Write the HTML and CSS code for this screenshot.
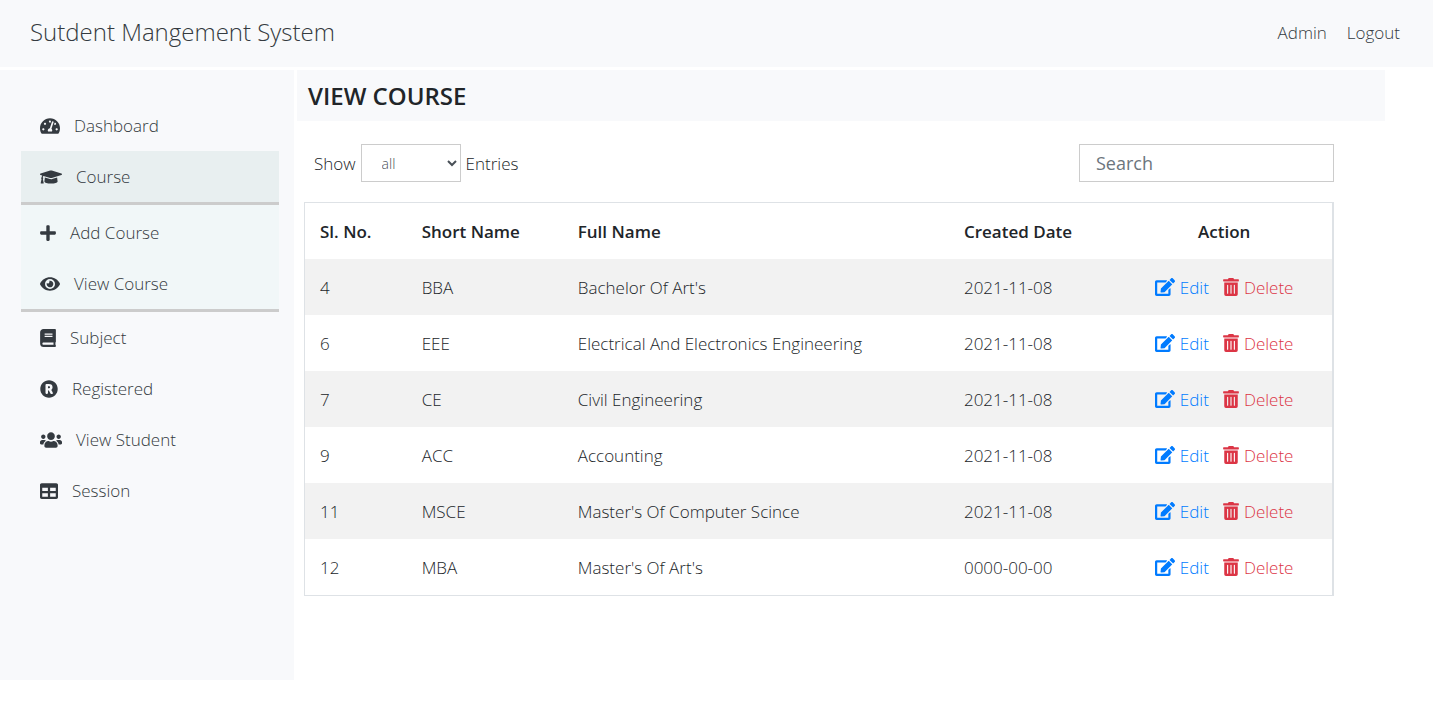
FILE: index.html
```html
<!DOCTYPE html>
<html lang="en">
<head>
<meta charset="utf-8">
<meta name="viewport" content="width=device-width, initial-scale=1">
<title>View Course</title>
<link rel="stylesheet" href="styles.css">
</head>
<body>
<svg class="sprite" aria-hidden="true">
  <symbol id="gauge" viewBox="0 0 576 512"><path d="M288 32C128.94 32 0 160.94 0 320c0 52.8 14.25 102.26 39.06 144.8 5.61 9.62 16.3 15.2 27.44 15.2h443c11.14 0 21.83-5.58 27.44-15.2C561.75 422.26 576 372.8 576 320c0-159.06-128.94-288-288-288zm0 64c14.71 0 26.58 10.13 30.32 23.65-1.11 2.26-2.64 4.23-3.45 6.67l-9.22 27.67c-5.13 3.49-10.97 6.01-17.64 6.01-17.67 0-32-14.33-32-32S270.33 96 288 96zM96 384c-17.67 0-32-14.33-32-32s14.33-32 32-32 32 14.33 32 32-14.33 32-32 32zm48-160c-17.67 0-32-14.33-32-32s14.33-32 32-32 32 14.33 32 32-14.33 32-32 32zm246.77-72.41l-61.33 184C343.13 347.33 352 364.54 352 384c0 11.72-3.38 22.55-8.88 32H232.88c-5.5-9.45-8.88-20.28-8.88-32 0-33.94 26.5-61.43 59.9-63.59l61.34-184.01c4.17-12.56 17.73-19.45 30.36-15.17 12.57 4.19 19.35 17.79 15.17 30.36zm14.66 57.2l15.52-46.55c3.47-1.29 7.13-2.23 11.05-2.23 17.67 0 32 14.33 32 32s-14.33 32-32 32c-11.38-.01-20.89-6.28-26.57-15.22zM480 384c-17.67 0-32-14.33-32-32s14.33-32 32-32 32 14.33 32 32-14.33 32-32 32z"/></symbol>
  <symbol id="cap" viewBox="0 0 640 512"><path d="M622.34 153.2L343.4 67.5c-15.2-4.67-31.6-4.67-46.79 0L17.66 153.2c-23.54 7.23-23.54 38.36 0 45.59l48.63 14.94c-10.67 13.19-17.23 29.28-17.88 46.9C38.78 266.15 32 276.11 32 288c0 10.78 5.68 19.85 13.86 25.65L20.33 428.53C18.11 438.52 25.71 448 35.94 448h56.11c10.24 0 17.84-9.48 15.62-19.47L82.14 313.65C90.32 307.85 96 298.78 96 288c0-11.57-6.47-21.25-15.66-26.87.76-15.02 8.44-28.3 20.69-36.72L296.6 284.5c9.06 2.78 26.44 6.25 46.79 0l278.95-85.7c23.55-7.24 23.55-38.36 0-45.6zM352.79 315.09c-28.53 8.76-52.84 3.92-65.59 0l-145.02-44.55L128 384c0 35.35 85.96 64 192 64s192-28.65 192-64l-14.18-113.47-145.03 44.56z"/></symbol>
  <symbol id="plus" viewBox="0 0 448 512"><path d="M416 208H272V64c0-17.67-14.33-32-32-32h-32c-17.67 0-32 14.33-32 32v144H32c-17.67 0-32 14.33-32 32v32c0 17.67 14.33 32 32 32h144v144c0 17.67 14.33 32 32 32h32c17.67 0 32-14.33 32-32V304h144c17.67 0 32-14.33 32-32v-32c0-17.67-14.33-32-32-32z"/></symbol>
  <symbol id="eye" viewBox="0 0 576 512"><path d="M572.52 241.4C518.29 135.59 410.93 64 288 64S57.68 135.64 3.48 241.41a32.35 32.35 0 0 0 0 29.19C57.71 376.41 165.07 448 288 448s230.32-71.64 284.52-177.41a32.35 32.35 0 0 0 0-29.19zM288 400a144 144 0 1 1 144-144 143.93 143.93 0 0 1-144 144zm0-240a95.31 95.31 0 0 0-25.31 3.79 47.85 47.85 0 0 1-66.9 66.9A95.78 95.78 0 1 0 288 160z"/></symbol>
  <symbol id="book" viewBox="0 0 448 512"><path d="M448 360V24c0-13.3-10.7-24-24-24H96C43 0 0 43 0 96v320c0 53 43 96 96 96h328c13.3 0 24-10.7 24-24v-16c0-7.5-3.5-14.3-8.9-18.7-4.2-15.4-4.2-59.3 0-74.7 5.4-4.3 8.9-11.1 8.9-18.6zM128 134c0-3.3 2.7-6 6-6h212c3.3 0 6 2.7 6 6v20c0 3.3-2.7 6-6 6H134c-3.3 0-6-2.7-6-6v-20zm0 64c0-3.3 2.7-6 6-6h212c3.3 0 6 2.7 6 6v20c0 3.3-2.7 6-6 6H134c-3.3 0-6-2.7-6-6v-20zm253.4 250H96c-17.7 0-32-14.3-32-32 0-17.6 14.4-32 32-32h285.4c-1.9 17.1-1.9 46.9 0 64z"/></symbol>
  <symbol id="registered" viewBox="0 0 512 512"><path d="M285.363 207.475c0 18.6-9.831 28.431-28.431 28.431h-29.876v-56.14h23.378c28.668 0 34.929 7.773 34.929 27.709zM504 256c0 136.967-111.033 248-248 248S8 392.967 8 256 119.033 8 256 8s248 111.033 248 248zM363.411 360.414c-46.729-84.825-43.299-78.636-44.702-80.98 23.432-15.172 37.945-42.979 37.945-74.486 0-54.244-31.5-89.252-105.498-89.252h-70.667c-13.255 0-24 10.745-24 24V372c0 13.255 10.745 24 24 24h22.567c13.255 0 24-10.745 24-24v-71.663h25.556l44.129 82.937a24.001 24.001 0 0 0 21.188 12.727h24.464c18.261-.001 29.829-19.591 21.018-35.587z"/></symbol>
  <symbol id="users" viewBox="0 0 640 512"><path d="M96 224c35.3 0 64-28.7 64-64s-28.7-64-64-64-64 28.7-64 64 28.7 64 64 64zm448 0c35.3 0 64-28.7 64-64s-28.7-64-64-64-64 28.7-64 64 28.7 64 64 64zm32 32h-64c-17.6 0-33.5 7.1-45.1 18.6 40.3 22.1 68.9 62 75.1 109.4h66c17.7 0 32-14.3 32-32v-32c0-35.3-28.7-64-64-64zm-256 0c61.9 0 112-50.1 112-112S381.9 32 320 32 208 82.1 208 144s50.1 112 112 112zm76.8 32h-8.3c-20.8 10-43.9 16-68.5 16s-47.6-6-68.5-16h-8.3C179.6 288 128 339.6 128 403.2V432c0 26.5 21.5 48 48 48h288c26.5 0 48-21.5 48-48v-28.8c0-63.6-51.6-115.2-115.2-115.2zm-223.7-13.4C161.5 263.1 145.6 256 128 256H64c-35.3 0-64 28.7-64 64v32c0 17.7 14.3 32 32 32h65.9c6.3-47.4 34.9-87.3 75.2-109.4z"/></symbol>
  <symbol id="table" viewBox="0 0 512 512"><path d="M464 32H48C21.49 32 0 53.49 0 80v352c0 26.51 21.49 48 48 48h416c26.51 0 48-21.49 48-48V80c0-26.51-21.49-48-48-48zM224 416H64v-96h160v96zm0-160H64v-96h160v96zm224 160H288v-96h160v96zm0-160H288v-96h160v96z"/></symbol>
  <symbol id="edit" viewBox="0 0 576 512"><path d="M402.6 83.2l90.2 90.2c3.8 3.8 3.8 10 0 13.8L274.4 405.6l-92.8 10.3c-12.4 1.4-22.9-9.1-21.5-21.5l10.3-92.8L388.8 83.2c3.8-3.8 10-3.8 13.8 0zm162-22.9l-48.8-48.8c-15.2-15.2-39.9-15.2-55.2 0l-35.4 35.4c-3.8 3.8-3.8 10 0 13.8l90.2 90.2c3.8 3.8 10 3.8 13.8 0l35.4-35.4c15.2-15.3 15.2-40 0-55.2zM384 346.2V448H64V128h229.8c3.2 0 6.2-1.3 8.5-3.5l40-40c7.6-7.6 2.2-20.5-8.5-20.5H48C21.5 64 0 85.5 0 112v352c0 26.5 21.5 48 48 48h352c26.5 0 48-21.5 48-48V306.2c0-10.7-12.9-16-20.5-8.5l-40 40c-2.2 2.3-3.5 5.3-3.5 8.5z"/></symbol>
  <symbol id="trash" viewBox="0 0 448 512"><path d="M32 464a48 48 0 0 0 48 48h288a48 48 0 0 0 48-48V128H32zm272-256a16 16 0 0 1 32 0v224a16 16 0 0 1-32 0zm-96 0a16 16 0 0 1 32 0v224a16 16 0 0 1-32 0zm-96 0a16 16 0 0 1 32 0v224a16 16 0 0 1-32 0zM432 32H312l-9.4-18.7A24 24 0 0 0 281.1 0H166.8a23.72 23.72 0 0 0-21.4 13.3L136 32H16A16 16 0 0 0 0 48v32a16 16 0 0 0 16 16h416a16 16 0 0 0 16-16V48a16 16 0 0 0-16-16z"/></symbol>
</svg>

<header class="topbar">
  <a class="brand" href="#">Sutdent Mangement System</a>
  <nav class="account">
    <a href="#">Admin</a>
    <a href="#">Logout</a>
  </nav>
</header>

<div class="layout">
  <nav class="sidebar">
    <a class="nav-link" href="#"><svg class="icon icon-20"><use href="#gauge"/></svg>Dashboard</a>
    <a class="nav-link nav-link-open" href="#"><svg class="icon icon-22"><use href="#cap"/></svg>Course</a>
    <div class="submenu">
      <a class="nav-link" href="#"><svg class="icon icon-16"><use href="#plus"/></svg>Add Course</a>
      <a class="nav-link" href="#"><svg class="icon icon-20"><use href="#eye"/></svg>View Course</a>
    </div>
    <a class="nav-link" href="#"><svg class="icon icon-16"><use href="#book"/></svg>Subject</a>
    <a class="nav-link" href="#"><svg class="icon icon-18"><use href="#registered"/></svg>Registered</a>
    <a class="nav-link" href="#"><svg class="icon icon-22"><use href="#users"/></svg>View Student</a>
    <a class="nav-link" href="#"><svg class="icon icon-18"><use href="#table"/></svg>Session</a>
  </nav>

  <main class="main">
    <h1 class="page-title">VIEW COURSE</h1>
    <div class="content">
      <div class="toolbar">
        <div class="entries">
          <label for="entries">Show</label>
          <select id="entries" class="entries-select"><option>all</option></select>
          <span>Entries</span>
        </div>
        <input class="search" type="text" placeholder="Search" aria-label="Search">
      </div>
      <table class="courses">
        <colgroup><col class="col-no"><col class="col-short"><col class="col-full"><col class="col-date"><col class="col-action"></colgroup>
        <thead>
          <tr><th>Sl. No.</th><th>Short Name</th><th>Full Name</th><th>Created Date</th><th class="action">Action</th></tr>
        </thead>
        <tbody>
          <tr><td>4</td><td>BBA</td><td>Bachelor Of Art's</td><td>2021-11-08</td><td><div class="actions"><a class="edit" href="#"><svg class="icon icon-20"><use href="#edit"/></svg>Edit</a><a class="delete" href="#"><svg class="icon icon-16"><use href="#trash"/></svg>Delete</a></div></td></tr>
          <tr><td>6</td><td>EEE</td><td>Electrical And Electronics Engineering</td><td>2021-11-08</td><td><div class="actions"><a class="edit" href="#"><svg class="icon icon-20"><use href="#edit"/></svg>Edit</a><a class="delete" href="#"><svg class="icon icon-16"><use href="#trash"/></svg>Delete</a></div></td></tr>
          <tr><td>7</td><td>CE</td><td>Civil Engineering</td><td>2021-11-08</td><td><div class="actions"><a class="edit" href="#"><svg class="icon icon-20"><use href="#edit"/></svg>Edit</a><a class="delete" href="#"><svg class="icon icon-16"><use href="#trash"/></svg>Delete</a></div></td></tr>
          <tr><td>9</td><td>ACC</td><td>Accounting</td><td>2021-11-08</td><td><div class="actions"><a class="edit" href="#"><svg class="icon icon-20"><use href="#edit"/></svg>Edit</a><a class="delete" href="#"><svg class="icon icon-16"><use href="#trash"/></svg>Delete</a></div></td></tr>
          <tr><td>11</td><td>MSCE</td><td>Master's Of Computer Scince</td><td>2021-11-08</td><td><div class="actions"><a class="edit" href="#"><svg class="icon icon-20"><use href="#edit"/></svg>Edit</a><a class="delete" href="#"><svg class="icon icon-16"><use href="#trash"/></svg>Delete</a></div></td></tr>
          <tr><td>12</td><td>MBA</td><td>Master's Of Art's</td><td>0000-00-00</td><td><div class="actions"><a class="edit" href="#"><svg class="icon icon-20"><use href="#edit"/></svg>Edit</a><a class="delete" href="#"><svg class="icon icon-16"><use href="#trash"/></svg>Delete</a></div></td></tr>
        </tbody>
      </table>
    </div>
  </main>
</div>
</body>
</html>
```

FILE: styles.css
```css
*, *::before, *::after { box-sizing: border-box; }

body {
  margin: 0;
  background: #fff;
  color: #212529;
  font-family: "Open Sans", "Noto Sans", sans-serif;
  font-size: 17px;
  font-weight: 350;
  line-height: 27px;
}

a { color: inherit; text-decoration: none; }

.sprite { display: none; }

.icon { flex: none; height: 18px; fill: currentColor; }
.icon-16 { width: 16px; }
.icon-18 { width: 18px; }
.icon-20 { width: 20px; }
.icon-22 { width: 22px; }

.topbar {
  display: flex;
  align-items: center;
  justify-content: space-between;
  padding: 14px 33px 17px 30px;
  margin-bottom: 3px;
  background: #f8f9fb;
  color: #343a40;
}
.brand { font-size: 24px; line-height: 36px; }
.account { display: flex; gap: 20px; }

.layout { display: flex; align-items: flex-start; gap: 3px; }

.sidebar {
  flex: 0 0 294px;
  min-height: 610px;
  padding: 30px 15px 30px 21px;
  background: #f8f9fb;
  color: #343a40;
}
.nav-link {
  display: flex;
  align-items: center;
  gap: 14px;
  padding: 12px 19px;
}
.nav-link-open { background: #e8eff0; border-bottom: 3px solid #ccc; }
.submenu { padding-top: 2px; background: #f1f7f8; border-bottom: 3px solid #ccc; }

.main { flex: 1; min-width: 0; padding-right: 48px; }
.page-title {
  margin: 0;
  padding: 10px 11px;
  background: #f8f9fb;
  font-size: 24px;
  font-weight: 600;
  line-height: 31px;
}
.content { padding: 23px 51px 0 7px; }

.toolbar { display: flex; justify-content: space-between; margin-bottom: 20px; padding-left: 10px; }
.entries { display: flex; align-items: center; gap: 5px; }
.entries-select {
  width: 100px;
  height: 38px;
  padding: 0 0 0 16px;
  border: 1px solid #ccc;
  border-radius: 0;
  background: #fff;
  color: #495057;
  font: inherit;
  font-size: 14px;
}
.search {
  width: 255px;
  height: 38px;
  padding: 0 16px;
  border: 1px solid #ccc;
  background: #fff;
  color: #495057;
  font: inherit;
  font-size: 18px;
  font-weight: 400;
}
.search::placeholder { color: #6c757d; opacity: 1; }

.courses {
  width: 100%;
  table-layout: fixed;
  border-collapse: separate;
  border-spacing: 0;
  border: 1px solid #dee2e6;
  border-right-width: 2px;
}
.col-no { width: 9.9%; }
.col-short { width: 15.2%; }
.col-full { width: 37.6%; }
.col-date { width: 16.3%; }
.col-action { width: 21%; }
.courses th, .courses td { height: 56px; padding: 0 15px; text-align: left; vertical-align: middle; }
.courses th { font-weight: 650; }
.courses th.action { text-align: center; }
.courses tbody tr:nth-child(odd) { background: #f2f2f2; }

.actions { display: flex; justify-content: center; gap: 14px; }
.actions a { display: flex; align-items: center; gap: 5px; }
.edit { color: #007bff; }
.delete { color: #dc3545; }
```
